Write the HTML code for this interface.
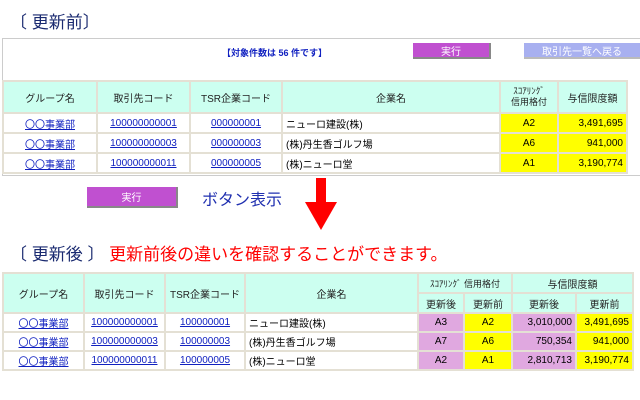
<!DOCTYPE html>
<html><head><meta charset="utf-8">
<style>
body{margin:0;width:640px;height:400px;background:#fff;position:relative;overflow:hidden;font-family:"Liberation Sans","Noto Sans CJK JP",sans-serif;}
.a{position:absolute;}
.ttl{font-size:17px;color:#1a2a70;white-space:nowrap;}
table{position:absolute;border-collapse:separate;border-spacing:2px;background:#e4e0d4;font-size:10px;}
td{background:#fff;padding:0 3px;white-space:nowrap;}
td.h{background:#ccfff0;text-align:center;color:#222;}
td.l{text-align:center;}
td.l span{color:#1020c0;text-decoration:underline;}
td.y{background:#ffff00;}
td.p{background:#e0a8e0;}
.c{text-align:center;}.r{text-align:right;}
.btn{position:absolute;background:#c050d0;color:#fff;font-size:10px;display:flex;align-items:center;justify-content:center;border-right:2px solid #888;border-bottom:2px solid #888;box-sizing:border-box;}
</style></head><body>
<div class="a ttl" style="left:10px;top:8px;">〔 更新前〕</div>
<div class="a" style="left:2px;top:38px;width:640px;height:136px;border:1px solid #ccc;border-right:none;"></div>
<div class="a" style="left:222px;top:46px;font-size:9px;font-weight:bold;color:#1020c0;">【対象件数は 56 件です】</div>
<div class="btn" style="left:413px;top:43px;width:78px;height:16px;">実行</div>
<div class="btn" style="left:524px;top:43px;width:118px;height:16px;background:#a8b0f0;border-color:#bbb;">取引先一覧へ戻る</div>
<table style="left:2px;top:80px;width:626px;">
<tr style="height:30px"><td class="h" style="width:86px">グループ名</td><td class="h" style="width:85px">取引先コード</td><td class="h" style="width:84px">TSR企業コード</td><td class="h" style="width:210px">企業名</td><td class="h" style="font-size:9px;line-height:11px;width:50px">ｽｺｱﾘﾝｸﾞ<br>信用格付</td><td class="h">与信限度額</td></tr>
<tr style="height:18px"><td class="l"><span>〇〇事業部</span></td><td class="l"><span>100000000001</span></td><td class="l"><span>000000001</span></td><td>ニューロ建設(株)</td><td class="y c">A2</td><td class="y r">3,491,695</td></tr>
<tr style="height:18px"><td class="l"><span>〇〇事業部</span></td><td class="l"><span>100000000003</span></td><td class="l"><span>000000003</span></td><td>(株)丹生香ゴルフ場</td><td class="y c">A6</td><td class="y r">941,000</td></tr>
<tr style="height:18px"><td class="l"><span>〇〇事業部</span></td><td class="l"><span>100000000011</span></td><td class="l"><span>000000005</span></td><td>(株)ニューロ堂</td><td class="y c">A1</td><td class="y r">3,190,774</td></tr>
</table>
<div class="btn" style="left:87px;top:187px;width:91px;height:21px;">実行</div>
<div class="a" style="left:202px;top:186px;font-size:16px;color:#2030b0;">ボタン表示</div>
<svg class="a" style="left:302px;top:178px" width="38" height="56"><rect x="14" y="0" width="10" height="26" fill="#f00"/><polygon points="3,24 35,24 19,52" fill="#f00"/></svg>
<div class="a ttl" style="left:10px;top:240px;">〔 更新後 〕 <span style="color:#f00;">更新前後の違いを確認することができます。</span></div>
<table style="left:2px;top:272px;width:632px;">
<tr style="height:18px"><td class="h" rowspan="2" style="width:73px">グループ名</td><td class="h" rowspan="2" style="width:73px">取引先コード</td><td class="h" rowspan="2" style="width:72px">TSR企業コード</td><td class="h" rowspan="2" style="width:165px">企業名</td><td class="h" colspan="2" style="font-size:9px">ｽｺｱﾘﾝｸﾞ 信用格付</td><td class="h" colspan="2">与信限度額</td></tr>
<tr style="height:18px"><td class="h" style="width:38px">更新後</td><td class="h" style="width:40px">更新前</td><td class="h" style="width:56px">更新後</td><td class="h">更新前</td></tr>
<tr style="height:17px"><td class="l"><span>〇〇事業部</span></td><td class="l"><span>100000000001</span></td><td class="l"><span>100000001</span></td><td>ニューロ建設(株)</td><td class="p c">A3</td><td class="y c">A2</td><td class="p r">3,010,000</td><td class="y r">3,491,695</td></tr>
<tr style="height:17px"><td class="l"><span>〇〇事業部</span></td><td class="l"><span>100000000003</span></td><td class="l"><span>100000003</span></td><td>(株)丹生香ゴルフ場</td><td class="p c">A7</td><td class="y c">A6</td><td class="p r">750,354</td><td class="y r">941,000</td></tr>
<tr style="height:17px"><td class="l"><span>〇〇事業部</span></td><td class="l"><span>100000000011</span></td><td class="l"><span>100000005</span></td><td>(株)ニューロ堂</td><td class="p c">A2</td><td class="y c">A1</td><td class="p r">2,810,713</td><td class="y r">3,190,774</td></tr>
</table>
</body></html>
